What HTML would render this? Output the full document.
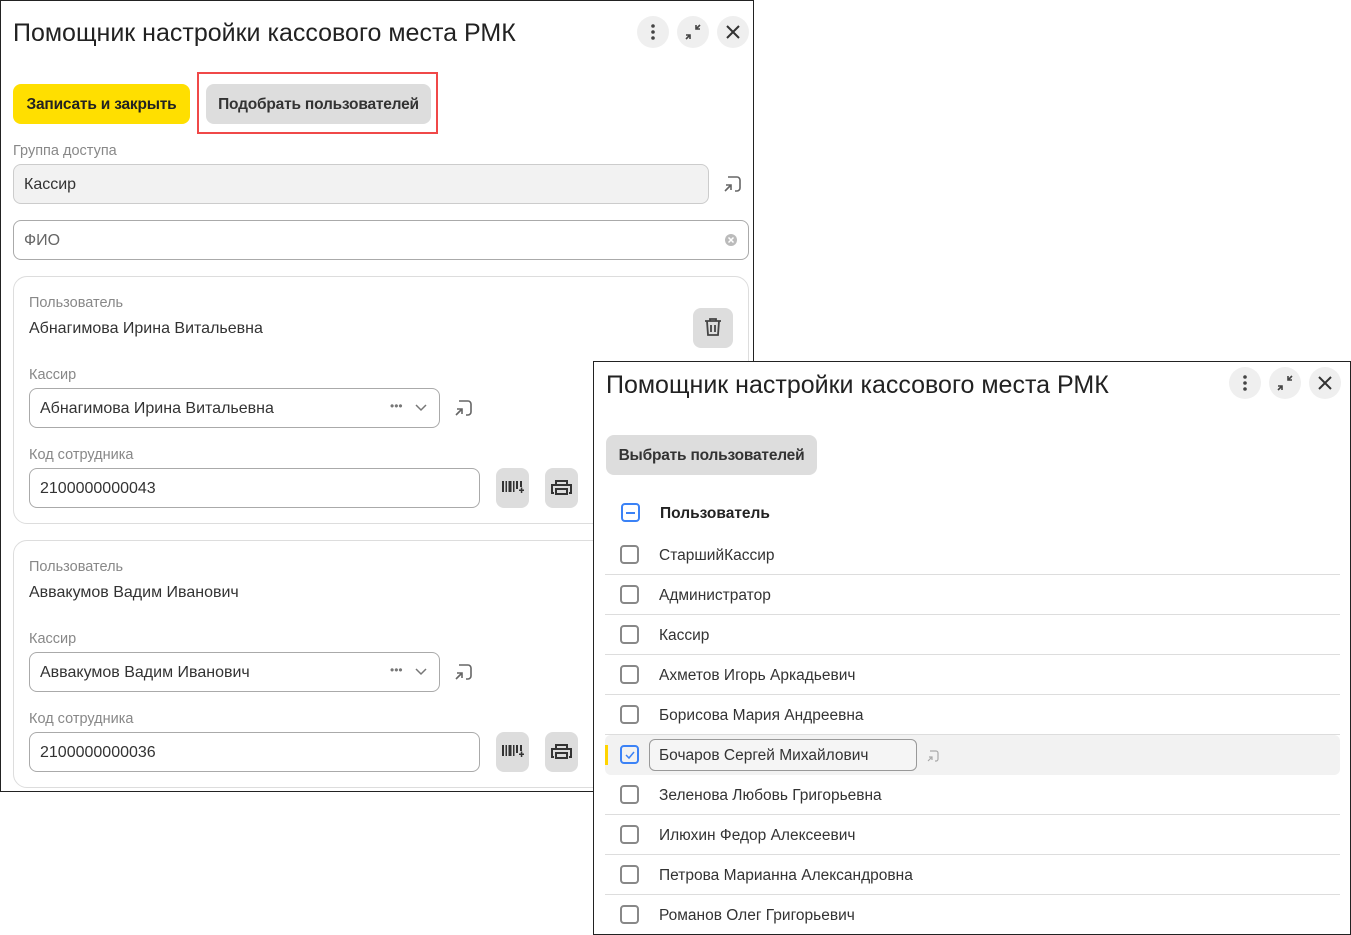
<!DOCTYPE html>
<html><head><meta charset="utf-8"><style>
*{box-sizing:border-box;margin:0;padding:0}
body{width:1351px;height:935px;background:#fff;position:relative;overflow:hidden;font-family:"Liberation Sans",sans-serif;color:#222}
.a{position:absolute}
.win{position:absolute;background:#fff;box-shadow:inset 0 0 0 1px #222;overflow:hidden}
.title{font-size:25px;color:#222;white-space:nowrap}
.rb{position:absolute;width:32px;height:32px;border-radius:50%;background:#efefef}
.btn{position:absolute;height:40px;border-radius:8px;font-size:15.5px;font-weight:bold;line-height:41px;text-align:center;color:#333;letter-spacing:-0.2px}
.lbl{position:absolute;font-size:14.5px;color:#888;margin-top:1px}
.inp{position:absolute;height:40px;border:1px solid #aaa;border-radius:8px;font-size:16px;line-height:40px;padding-left:10px;color:#333}
.card{position:absolute;border:1px solid #ddd;border-radius:14px}
.gb{position:absolute;width:33px;height:40px;border-radius:8px;background:#ddd}
.cb{position:absolute;width:19px;height:19px;border:2px solid #888;border-radius:4px}
.row{position:absolute;left:12px;width:735px;height:40px;border-bottom:1px solid #ddd}
.row span{position:absolute;left:54px;top:12px;font-size:15.5px;color:#333}
.row .cb{left:15px;top:10px}
</style></head><body>

<div class="win" style="left:0;top:0;width:754px;height:792px">
 <div class="a title" style="left:13px;top:19px">Помощник настройки кассового места РМК</div>
 <div class="rb" style="left:637px;top:16px"><svg width="32" height="32"><circle cx="16" cy="10" r="1.8" fill="#444"/><circle cx="16" cy="16" r="1.8" fill="#444"/><circle cx="16" cy="22" r="1.8" fill="#444"/></svg></div>
 <div class="rb" style="left:677px;top:16px"><svg width="32" height="32" stroke="#444" stroke-width="1.6" fill="none"><path d="M19 9v4h4M19 13l4-4M13 23v-4H9M13 19l-4 4"/></svg></div>
 <div class="rb" style="left:717px;top:16px"><svg width="32" height="32" stroke="#333" stroke-width="2"><path d="M10 10l12 12M22 10L10 22"/></svg></div>

 <div class="btn" style="left:13px;top:84px;width:177px;background:#ffdf00;color:#222">Записать и закрыть</div>
 <div class="a" style="left:197px;top:72px;width:241px;height:62px;border:2px solid #f04848"></div>
 <div class="btn" style="left:206px;top:84px;width:225px;background:#ddd">Подобрать пользователей</div>

 <div class="lbl" style="left:13px;top:142px">Группа доступа</div>
 <div class="inp" style="left:13px;top:164px;width:696px;background:#f2f2f2;border-color:#ccc">Кассир</div>
 <svg class="a" style="left:722px;top:174px" width="20" height="20" fill="none" stroke="#666" stroke-width="1.6"><path d="M6 3h9a3 3 0 0 1 3 3v8a3 3 0 0 1-3 3h-2M3 17l6-6M4 11h5v5"/></svg>
 <div class="inp" style="left:13px;top:220px;width:736px;color:#666">ФИО</div>
 <svg class="a" style="left:724px;top:233px" width="14" height="14"><circle cx="7" cy="7" r="6" fill="#bbb"/><path d="M4.5 4.5l5 5M9.5 4.5l-5 5" stroke="#fff" stroke-width="1.5"/></svg>

 <div class="card" style="left:13px;top:276px;width:736px;height:248px"></div>
 <div class="lbl" style="left:29px;top:294px">Пользователь</div>
 <div class="a" style="left:29px;top:320px;font-size:16px;color:#333">Абнагимова Ирина Витальевна</div>
 <div class="gb" style="left:693px;top:308px;width:40px"><svg width="40" height="40" fill="none" stroke="#444" stroke-width="1.8"><path d="M12 13h16M17 13v-2h6v2M14 13l1 14h10l1-14M18 17v7M22 17v7"/></svg></div>
 <div class="lbl" style="left:29px;top:366px">Кассир</div>
 <div class="inp" style="left:29px;top:388px;width:411px">Абнагимова Ирина Витальевна</div>
 <div class="a" style="left:390px;top:399px;font-size:12px;color:#777">•••</div>
 <svg class="a" style="left:415px;top:403px" width="12" height="10" fill="none" stroke="#777" stroke-width="1.5"><path d="M1 2l5 5 5-5"/></svg>
 <svg class="a" style="left:453px;top:398px" width="20" height="20" fill="none" stroke="#666" stroke-width="1.6"><path d="M6 3h9a3 3 0 0 1 3 3v8a3 3 0 0 1-3 3h-2M3 17l6-6M4 11h5v5"/></svg>
 <div class="lbl" style="left:29px;top:446px">Код сотрудника</div>
 <div class="inp" style="left:29px;top:468px;width:451px">2100000000043</div>
 <div class="gb" style="left:496px;top:468px"><svg width="33" height="40" fill="#333"><rect x="6" y="13" width="2" height="11"/><rect x="9.5" y="13" width="1.5" height="11"/><rect x="12.5" y="13" width="3" height="11"/><rect x="17" y="13" width="1.5" height="11"/><rect x="20" y="13" width="2" height="8"/><rect x="24" y="13" width="2" height="6"/><rect x="23" y="21.5" width="5" height="1.5"/><rect x="24.8" y="19.5" width="1.5" height="5.5"/></svg></div>
 <div class="gb" style="left:545px;top:468px"><svg width="33" height="40" fill="none" stroke="#333" stroke-width="2"><path d="M11 17v-4h11v4M9 25H7v-8h19v8h-2M11 21h11v5H11z"/></svg></div>

 <div class="card" style="left:13px;top:540px;width:736px;height:248px"></div>
 <div class="lbl" style="left:29px;top:558px">Пользователь</div>
 <div class="a" style="left:29px;top:584px;font-size:16px;color:#333">Аввакумов Вадим Иванович</div>
 <div class="lbl" style="left:29px;top:630px">Кассир</div>
 <div class="inp" style="left:29px;top:652px;width:411px">Аввакумов Вадим Иванович</div>
 <div class="a" style="left:390px;top:663px;font-size:12px;color:#777">•••</div>
 <svg class="a" style="left:415px;top:667px" width="12" height="10" fill="none" stroke="#777" stroke-width="1.5"><path d="M1 2l5 5 5-5"/></svg>
 <svg class="a" style="left:453px;top:662px" width="20" height="20" fill="none" stroke="#666" stroke-width="1.6"><path d="M6 3h9a3 3 0 0 1 3 3v8a3 3 0 0 1-3 3h-2M3 17l6-6M4 11h5v5"/></svg>
 <div class="lbl" style="left:29px;top:710px">Код сотрудника</div>
 <div class="inp" style="left:29px;top:732px;width:451px">2100000000036</div>
 <div class="gb" style="left:496px;top:732px"><svg width="33" height="40" fill="#333"><rect x="6" y="13" width="2" height="11"/><rect x="9.5" y="13" width="1.5" height="11"/><rect x="12.5" y="13" width="3" height="11"/><rect x="17" y="13" width="1.5" height="11"/><rect x="20" y="13" width="2" height="8"/><rect x="24" y="13" width="2" height="6"/><rect x="23" y="21.5" width="5" height="1.5"/><rect x="24.8" y="19.5" width="1.5" height="5.5"/></svg></div>
 <div class="gb" style="left:545px;top:732px"><svg width="33" height="40" fill="none" stroke="#333" stroke-width="2"><path d="M11 17v-4h11v4M9 25H7v-8h19v8h-2M11 21h11v5H11z"/></svg></div>
</div>

<div class="win" style="left:593px;top:361px;width:758px;height:574px">
 <div class="a title" style="left:13px;top:10px">Помощник настройки кассового места РМК</div>
 <div class="rb" style="left:636px;top:6px"><svg width="32" height="32"><circle cx="16" cy="10" r="1.8" fill="#444"/><circle cx="16" cy="16" r="1.8" fill="#444"/><circle cx="16" cy="22" r="1.8" fill="#444"/></svg></div>
 <div class="rb" style="left:676px;top:6px"><svg width="32" height="32" stroke="#444" stroke-width="1.6" fill="none"><path d="M19 9v4h4M19 13l4-4M13 23v-4H9M13 19l-4 4"/></svg></div>
 <div class="rb" style="left:716px;top:6px"><svg width="32" height="32" stroke="#333" stroke-width="2"><path d="M10 10l12 12M22 10L10 22"/></svg></div>
 <div class="btn" style="left:13px;top:74px;width:211px;background:#ddd">Выбрать пользователей</div>

 <div class="cb" style="left:28px;top:142px;border-color:#3b82f6"><div style="position:absolute;left:3px;top:6.5px;width:9px;height:2px;background:#3b82f6"></div></div>
 <div class="a" style="left:67px;top:144px;font-size:15.5px;font-weight:bold;color:#222">Пользователь</div>

 <div class="row" style="top:174px"><div class="cb"></div><span>СтаршийКассир</span></div>
 <div class="row" style="top:214px"><div class="cb"></div><span>Администратор</span></div>
 <div class="row" style="top:254px"><div class="cb"></div><span>Кассир</span></div>
 <div class="row" style="top:294px"><div class="cb"></div><span>Ахметов Игорь Аркадьевич</span></div>
 <div class="row" style="top:334px"><div class="cb"></div><span>Борисова Мария Андреевна</span></div>
 <div class="row" style="top:374px;background:#f2f2f2;border-bottom:none;border-radius:6px;width:735px">
  <div class="a" style="left:0;top:10px;width:3px;height:20px;background:#ffd400"></div>
  <div class="cb" style="border-color:#3b82f6"><svg class="a" style="left:2px;top:3px" width="12" height="10" fill="none" stroke="#3b82f6" stroke-width="1.5"><path d="M2 5l3 3 5-6"/></svg></div>
  <div class="a" style="left:44px;top:4px;width:268px;height:32px;border:1px solid #999;border-radius:6px;background:#f5f5f5"></div>
  <span>Бочаров Сергей Михайлович</span>
  <svg class="a" style="left:321px;top:14px" width="14" height="14" fill="none" stroke="#aaa" stroke-width="1.2"><path d="M4 2h6a2 2 0 0 1 2 2v6a2 2 0 0 1-2 2H9M2 12l4-4M3 8h3v3"/></svg>
 </div>
 <div class="row" style="top:414px"><div class="cb"></div><span>Зеленова Любовь Григорьевна</span></div>
 <div class="row" style="top:454px"><div class="cb"></div><span>Илюхин Федор Алексеевич</span></div>
 <div class="row" style="top:494px"><div class="cb"></div><span>Петрова Марианна Александровна</span></div>
 <div class="row" style="top:534px;border-bottom:none"><div class="cb"></div><span>Романов Олег Григорьевич</span></div>
</div>
</body></html>
